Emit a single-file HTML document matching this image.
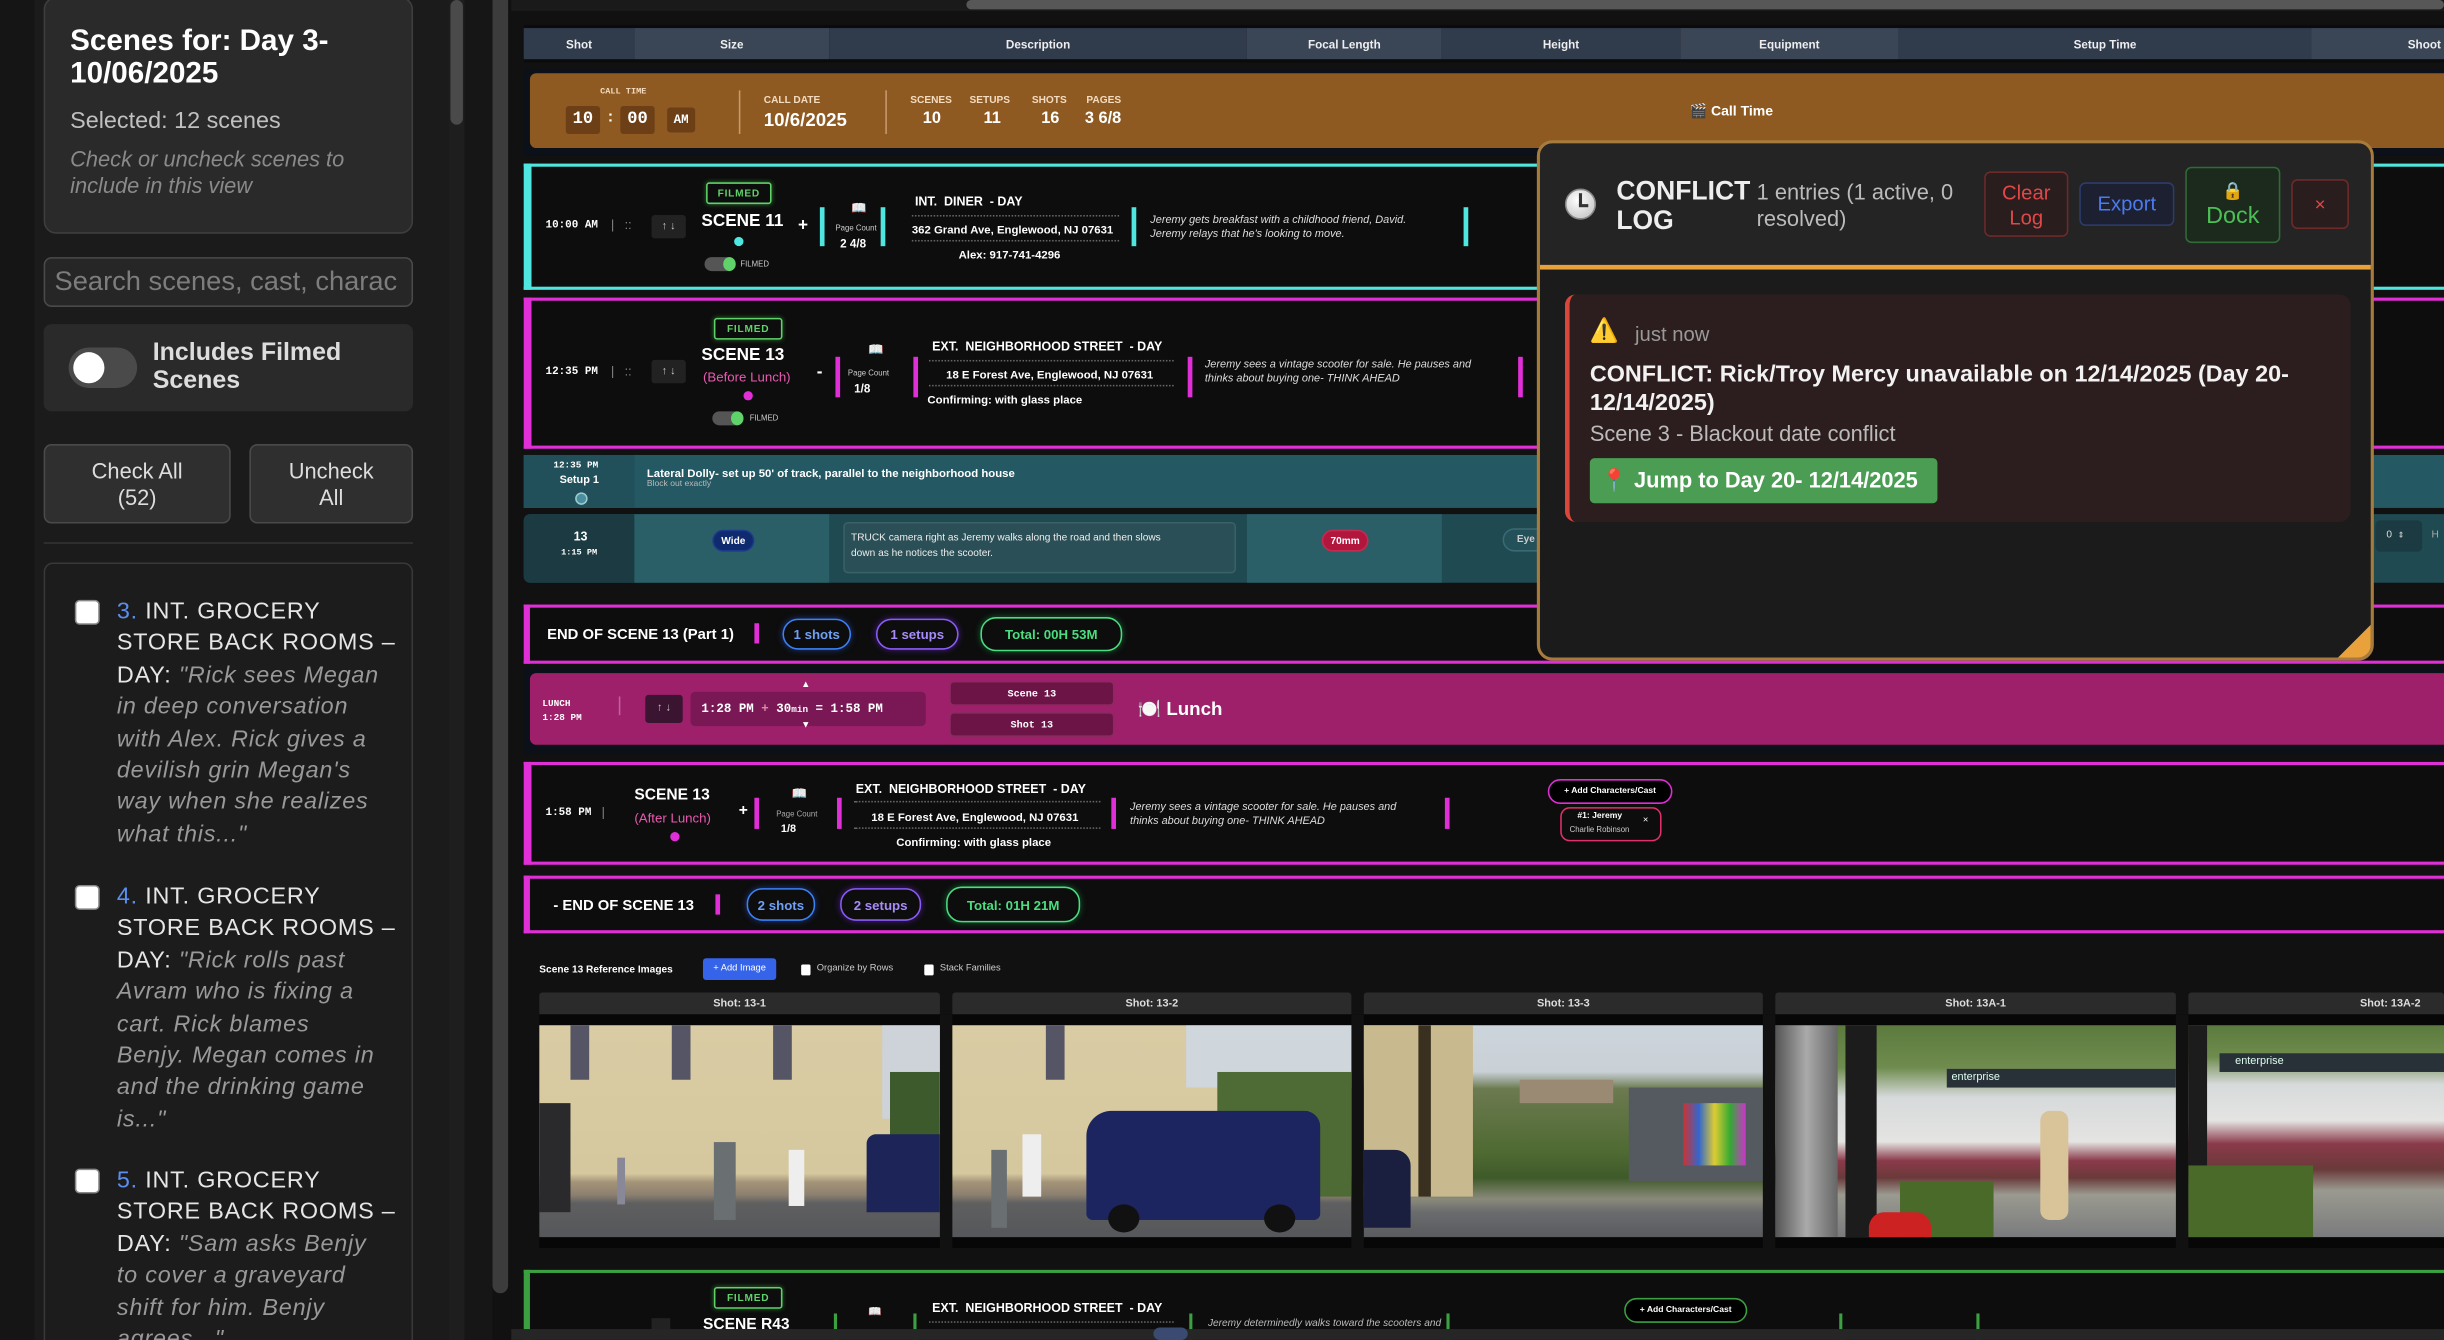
<!DOCTYPE html>
<html><head><meta charset="utf-8">
<style>
*{box-sizing:border-box;margin:0;padding:0}
html,body{width:2444px;height:1340px;overflow:hidden;background:#111}
#s{position:absolute;left:0;top:0;width:1568px;height:860px;transform:scale(1.55867,1.5581);transform-origin:0 0;font-family:"Liberation Sans",sans-serif;color:#fff;background:#111;overflow:hidden}
.a{position:absolute;white-space:nowrap}
.m{font-family:"Liberation Mono",monospace}
.b{font-weight:bold}
.hd{position:absolute;top:18px;height:20px;font-size:7.5px;font-weight:bold;display:flex;align-items:center;justify-content:center;color:#eee}
.bar{position:absolute;width:3px}
.pill{position:absolute;border-radius:10px;border:1.5px solid;font-size:8.5px;font-weight:bold;display:flex;align-items:center;justify-content:center}
.img{position:absolute;top:658px;height:136px;overflow:hidden}
.ih{position:absolute;top:637px;height:14px;background:#2b2b2b;font-size:7px;font-weight:bold;color:#ddd;display:flex;align-items:center;justify-content:center;border-radius:2px 2px 0 0}
.fb{position:absolute;border:1.5px solid #5fd36a;color:#5fd36a;font-size:6.5px;font-weight:bold;display:flex;align-items:center;justify-content:center;border-radius:2px;letter-spacing:.5px;box-shadow:0 0 3px #2a6a2a}
.it{position:absolute;left:75px;font-size:15px;line-height:20.4px;color:#e6e6e6;white-space:nowrap;letter-spacing:.5px}
.it i{color:#999}
</style></head><body><div id="s">

<div class="a" style="left:0;top:0;width:22px;height:860px;background:#151515"></div>
<div class="a" style="left:22px;top:0;width:268px;height:860px;background:#1b1b1b"></div>
<div class="a" style="left:288px;top:0;width:10px;height:860px;background:#1e1e1e"></div>
<div class="a" style="left:289px;top:0;width:8px;height:80px;background:#4a4a4a;border-radius:4px"></div>
<div class="a" style="left:298px;top:0;width:18px;height:860px;background:#161616"></div>
<div class="a" style="left:316px;top:0;width:10px;height:830px;background:#3c3c3c;border-radius:0 0 5px 5px"></div>

<div class="a" style="left:28px;top:-2px;width:237px;height:152px;background:#2a2a2a;border:1px solid #3e3e3e;border-radius:8px"></div>
<div class="a b" style="left:45px;top:16px;font-size:19px;line-height:21px">Scenes for: Day 3-<br>10/06/2025</div>
<div class="a" style="left:45px;top:69px;font-size:15px;color:#c0c0c0">Selected: 12 scenes</div>
<div class="a" style="left:45px;top:94px;font-size:14px;line-height:17px;color:#8a8a8a;font-style:italic">Check or uncheck scenes to<br>include in this view</div>

<div class="a" style="left:28px;top:165px;width:237px;height:32px;background:#262626;border:1px solid #4a4a4a;border-radius:5px"></div>
<div class="a" style="left:35px;top:170px;font-size:17.5px;color:#7d7d7d">Search scenes, cast, charac</div>

<div class="a" style="left:28px;top:208px;width:237px;height:56px;background:#2a2a2a;border-radius:5px"></div>
<div class="a" style="left:44px;top:223px;width:44px;height:26px;background:#4a4a4a;border-radius:13px"></div>
<div class="a" style="left:47px;top:226px;width:20px;height:20px;background:#fff;border-radius:50%"></div>
<div class="a b" style="left:98px;top:218px;font-size:16px;line-height:18px;color:#ddd">Includes Filmed<br>Scenes</div>

<div class="a" style="left:28px;top:285px;width:120px;height:51px;background:#2f2f2f;border:1px solid #4a4a4a;border-radius:5px;font-size:14px;color:#ddd;text-align:center;padding-top:8px;line-height:17px;white-space:normal">Check All<br>(52)</div>
<div class="a" style="left:160px;top:285px;width:105px;height:51px;background:#2f2f2f;border:1px solid #4a4a4a;border-radius:5px;font-size:14px;color:#ddd;text-align:center;padding-top:8px;line-height:17px;white-space:normal">Uncheck<br>All</div>
<div class="a" style="left:28px;top:348px;width:237px;height:1px;background:#333"></div>

<div class="a" style="left:28px;top:361px;width:237px;height:520px;background:#1c1c1c;border:1px solid #383838;border-radius:6px"></div>
<div class="a" style="left:48px;top:385px;width:16px;height:16px;background:#fff;border:1px solid #888;border-radius:3px"></div>
<div class="a" style="left:48px;top:568px;width:16px;height:16px;background:#fff;border:1px solid #888;border-radius:3px"></div>
<div class="a" style="left:48px;top:750px;width:16px;height:16px;background:#fff;border:1px solid #888;border-radius:3px"></div>
<div class="it" style="top:383px"><span style="color:#5b8ef0">3.</span> INT. GROCERY<br>STORE BACK ROOMS –<br>DAY: <i>"Rick sees Megan<br>in deep conversation<br>with Alex. Rick gives a<br>devilish grin Megan's<br>way when she realizes<br>what this..."</i></div>
<div class="it" style="top:566px"><span style="color:#5b8ef0">4.</span> INT. GROCERY<br>STORE BACK ROOMS –<br>DAY: <i>"Rick rolls past<br>Avram who is fixing a<br>cart. Rick blames<br>Benjy. Megan comes in<br>and the drinking game<br>is..."</i></div>
<div class="it" style="top:748px"><span style="color:#5b8ef0">5.</span> INT. GROCERY<br>STORE BACK ROOMS –<br>DAY: <i>"Sam asks Benjy<br>to cover a graveyard<br>shift for him. Benjy<br>agrees..."</i></div>

<div class="a" style="left:328px;top:0;width:1240px;height:860px;background:#111"></div>
<div class="a" style="left:328px;top:0;width:1240px;height:7px;background:#1a1a1a"></div>
<div class="a" style="left:620px;top:0;width:948px;height:6px;background:#575757;border-radius:3px"></div>
<div class="a" style="left:336px;top:16px;width:1232px;height:24px;background:#0b0b0b"></div>

<div class="hd" style="left:336px;width:71px;background:#303b4c">Shot</div>
<div class="hd" style="left:407px;width:125px;background:#3a4556">Size</div>
<div class="hd" style="left:532px;width:268px;background:#303b4c">Description</div>
<div class="hd" style="left:800px;width:125px;background:#3a4556">Focal Length</div>
<div class="hd" style="left:925px;width:153px;background:#303b4c">Height</div>
<div class="hd" style="left:1078px;width:140px;background:#3a4556">Equipment</div>
<div class="hd" style="left:1218px;width:265px;background:#303b4c">Setup Time</div>
<div class="hd" style="left:1483px;width:85px;background:#3a4556;justify-content:flex-end;padding-right:2px">Shoot</div>

<div class="a" style="left:336px;top:44px;width:1232px;height:56px;background:#0c1018"></div>
<div class="a" style="left:340px;top:47px;width:1228px;height:48px;background:#8e5a22;border-radius:4px 0 0 4px"></div>
<div class="a m b" style="left:385px;top:55px;font-size:5.5px;color:#f3dcc0">CALL TIME</div>
<div class="a m b" style="left:363px;top:68px;width:22px;height:18px;background:#6c3f16;border-radius:2px;font-size:11px;display:flex;align-items:center;justify-content:center">10</div>
<div class="a b" style="left:390px;top:70px;font-size:10px">:</div>
<div class="a m b" style="left:398px;top:68px;width:22px;height:18px;background:#6c3f16;border-radius:2px;font-size:11px;display:flex;align-items:center;justify-content:center">00</div>
<div class="a m b" style="left:428px;top:69px;width:18px;height:16px;background:#6c3f16;border-radius:2px;font-size:8px;display:flex;align-items:center;justify-content:center">AM</div>
<div class="a" style="left:474px;top:58px;width:1px;height:28px;background:#c89a6a"></div>
<div class="a b" style="left:490px;top:61px;font-size:6.5px;color:#f3dcc0">CALL DATE</div>
<div class="a b" style="left:490px;top:70px;font-size:12px">10/6/2025</div>
<div class="a" style="left:568px;top:58px;width:1px;height:28px;background:#c89a6a"></div>
<div class="a b" style="left:584px;top:61px;font-size:6.5px;color:#f3dcc0">SCENES</div>
<div class="a b" style="left:592px;top:70px;font-size:10.5px">10</div>
<div class="a b" style="left:622px;top:61px;font-size:6.5px;color:#f3dcc0">SETUPS</div>
<div class="a b" style="left:631px;top:70px;font-size:10.5px">11</div>
<div class="a b" style="left:662px;top:61px;font-size:6.5px;color:#f3dcc0">SHOTS</div>
<div class="a b" style="left:668px;top:70px;font-size:10.5px">16</div>
<div class="a b" style="left:697px;top:61px;font-size:6.5px;color:#f3dcc0">PAGES</div>
<div class="a b" style="left:696px;top:70px;font-size:10.5px">3 6/8</div>
<div class="a b" style="left:1084px;top:66px;font-size:9px">🎬 Call Time</div>

<div class="a" style="left:336px;top:105px;width:1232px;height:81px;background:#0d0d0d;border:2px solid #4fe6e0;border-left-width:5px;border-right:none"></div>
<div class="a m b" style="left:350px;top:141px;font-size:7px">10:00 AM</div>
<div class="a" style="left:392px;top:140px;font-size:8px;color:#888">|&nbsp;&nbsp;&nbsp;::</div>
<div class="a" style="left:418px;top:138px;width:22px;height:15px;background:#222;border-radius:2px;font-size:7px;color:#ccc;text-align:center;line-height:15px">↑ ↓</div>
<div class="fb" style="left:453px;top:117px;width:42px;height:14px">FILMED</div>
<div class="a b" style="left:450px;top:136px;font-size:11px">SCENE 11</div>
<div class="a" style="left:471px;top:152px;width:6px;height:6px;border-radius:50%;background:#4fe6e0"></div>
<div class="a" style="left:452px;top:165px;width:20px;height:9px;border-radius:5px;background:#555"></div>
<div class="a" style="left:464px;top:165px;width:8px;height:9px;border-radius:50%;background:#5fd36a"></div>
<div class="a" style="left:475px;top:167px;font-size:5px;color:#ccc">FILMED</div>
<div class="a b" style="left:512px;top:139px;font-size:11px">+</div>
<div class="bar" style="left:526px;top:133px;height:25px;background:#4fe6e0"></div>
<div class="a" style="left:546px;top:129px;font-size:8px">📖</div>
<div class="a" style="left:536px;top:144px;font-size:5px;color:#ccc">Page Count</div>
<div class="a b" style="left:539px;top:152px;font-size:7.5px">2 4/8</div>
<div class="bar" style="left:565px;top:133px;height:25px;background:#4fe6e0"></div>
<div class="a b" style="left:587px;top:125px;font-size:8px">INT.&nbsp; DINER &nbsp;- DAY</div>
<div class="a" style="left:585px;top:138px;width:133px;border-top:1px dotted #666"></div>
<div class="a b" style="left:585px;top:143px;font-size:7.3px">362 Grand Ave, Englewood, NJ 07631</div>
<div class="a" style="left:585px;top:154px;width:133px;border-top:1px dotted #666"></div>
<div class="a b" style="left:615px;top:159px;font-size:7.3px">Alex: 917-741-4296</div>
<div class="bar" style="left:726px;top:133px;height:25px;background:#4fe6e0"></div>
<div class="a" style="left:738px;top:137px;font-size:7px;line-height:9px;font-style:italic;color:#ddd">Jeremy gets breakfast with a childhood friend, David.<br>Jeremy relays that he's looking to move.</div>
<div class="bar" style="left:939px;top:133px;height:25px;background:#4fe6e0"></div>

<div class="a" style="left:336px;top:191px;width:1232px;height:97px;background:#0d0d0d;border:2px solid #e02fd6;border-left-width:5px;border-right:none"></div>
<div class="a m b" style="left:350px;top:235px;font-size:7px">12:35 PM</div>
<div class="a" style="left:392px;top:234px;font-size:8px;color:#888">|&nbsp;&nbsp;&nbsp;::</div>
<div class="a" style="left:418px;top:231px;width:22px;height:15px;background:#222;border-radius:2px;font-size:7px;color:#ccc;text-align:center;line-height:15px">↑ ↓</div>
<div class="fb" style="left:458px;top:204px;width:44px;height:14px">FILMED</div>
<div class="a b" style="left:450px;top:222px;font-size:11px">SCENE 13</div>
<div class="a" style="left:451px;top:237px;font-size:8.5px;color:#e85ab0">(Before Lunch)</div>
<div class="a" style="left:477px;top:251px;width:6px;height:6px;border-radius:50%;background:#e02fd6"></div>
<div class="a" style="left:457px;top:264px;width:20px;height:9px;border-radius:5px;background:#555"></div>
<div class="a" style="left:469px;top:264px;width:8px;height:9px;border-radius:50%;background:#5fd36a"></div>
<div class="a" style="left:481px;top:266px;font-size:5px;color:#ccc">FILMED</div>
<div class="a b" style="left:524px;top:233px;font-size:11px">-</div>
<div class="bar" style="left:536px;top:229px;height:26px;background:#e02fd6"></div>
<div class="a" style="left:557px;top:220px;font-size:8px">📖</div>
<div class="a" style="left:544px;top:237px;font-size:5px;color:#ccc">Page Count</div>
<div class="a b" style="left:548px;top:245px;font-size:7.5px">1/8</div>
<div class="bar" style="left:586px;top:229px;height:26px;background:#e02fd6"></div>
<div class="a b" style="left:598px;top:218px;font-size:8px">EXT.&nbsp; NEIGHBORHOOD STREET &nbsp;- DAY</div>
<div class="a" style="left:596px;top:231px;width:157px;border-top:1px dotted #666"></div>
<div class="a b" style="left:607px;top:236px;font-size:7.3px">18 E Forest Ave, Englewood, NJ 07631</div>
<div class="a" style="left:596px;top:247px;width:157px;border-top:1px dotted #666"></div>
<div class="a b" style="left:595px;top:252px;font-size:7.3px">Confirming: with glass place</div>
<div class="bar" style="left:762px;top:229px;height:26px;background:#e02fd6"></div>
<div class="a" style="left:773px;top:230px;font-size:7px;line-height:9px;font-style:italic;color:#ddd">Jeremy sees a vintage scooter for sale. He pauses and<br>thinks about buying one- THINK AHEAD</div>
<div class="bar" style="left:974px;top:229px;height:26px;background:#e02fd6"></div>

<div class="a" style="left:336px;top:292px;width:1232px;height:34px;background:#245863"></div>
<div class="a" style="left:336px;top:292px;width:71px;height:34px;background:#22505a"></div>
<div class="a m b" style="left:355px;top:295px;font-size:6px">12:35 PM</div>
<div class="a b" style="left:359px;top:305px;font-size:7px">Setup 1</div>
<div class="a" style="left:369px;top:316px;width:8px;height:8px;border-radius:50%;background:#4a8ea0;border:1px solid #9cc"></div>
<div class="a b" style="left:415px;top:299px;font-size:7.3px">Lateral Dolly- set up 50' of track, parallel to the neighborhood house</div>
<div class="a" style="left:415px;top:308px;font-size:5.5px;color:#bbb">Block out exactly</div>

<div class="a" style="left:336px;top:330px;width:1232px;height:44px;background:#1f4a52;border-radius:4px 0 0 4px"></div>
<div class="a" style="left:336px;top:330px;width:71px;height:44px;background:#1c3a42;border-radius:4px 0 0 4px"></div>
<div class="a" style="left:407px;top:330px;width:125px;height:44px;background:#2a5f68"></div>
<div class="a" style="left:800px;top:330px;width:125px;height:44px;background:#2a5f68"></div>
<div class="a b" style="left:368px;top:340px;font-size:8px">13</div>
<div class="a m b" style="left:360px;top:351px;font-size:5.5px">1:15 PM</div>
<div class="pill" style="left:457px;top:340px;width:27px;height:14px;background:#0f2a6e;border-color:#1c3a8a;font-size:6.5px">Wide</div>
<div class="a" style="left:541px;top:335px;width:252px;height:33px;background:#2a4f56;border:1px solid #3a6068;border-radius:3px"></div>
<div class="a" style="left:546px;top:341px;font-size:6.5px;line-height:10px;color:#eee">TRUCK camera right as Jeremy walks along the road and then slows<br>down as he notices the scooter.</div>
<div class="pill" style="left:848px;top:340px;width:30px;height:14px;background:#b3163d;border-color:#c52a50;font-size:6.5px">70mm</div>
<div class="pill" style="left:964px;top:339px;width:30px;height:15px;background:#24505a;border-color:#3a6a72;font-size:6.5px;color:#ccc">Eye</div>
<div class="a" style="left:1524px;top:334px;width:30px;height:20px;background:#1c3a42;border-radius:3px"></div>
<div class="a" style="left:1531px;top:340px;font-size:6.5px;color:#ddd">0 &nbsp;<span style="font-size:5px">⇕</span></div>
<div class="a" style="left:1560px;top:340px;font-size:6.5px;color:#aaa">H</div>

<div class="a" style="left:336px;top:388px;width:1232px;height:38px;background:#0d0d0d;border:2px solid #e02fd6;border-left-width:4px;border-right:none"></div>
<div class="a b" style="left:351px;top:402px;font-size:9.5px">END OF SCENE 13 (Part 1)</div>
<div class="bar" style="left:484px;top:400px;height:13px;background:#e02fd6"></div>
<div class="pill" style="left:502px;top:397px;width:44px;height:20px;border-color:#3b82f6;color:#6ea0f6;box-shadow:0 0 4px #1e3a8a">1 shots</div>
<div class="pill" style="left:562px;top:397px;width:53px;height:20px;border-color:#8b5cf6;color:#a78bfa;box-shadow:0 0 4px #4c1d95">1 setups</div>
<div class="pill" style="left:629px;top:396px;width:91px;height:22px;border-color:#4ade80;color:#4ade80;box-shadow:0 0 4px #166534">Total: 00H 53M</div>

<div class="a" style="left:336px;top:428px;width:1232px;height:56px;background:#0c1018"></div>
<div class="a" style="left:340px;top:432px;width:1228px;height:46px;background:#9e206b;border-radius:4px 0 0 4px"></div>
<div class="a m b" style="left:348px;top:447px;font-size:6px;line-height:9px">LUNCH<br>1:28 PM</div>
<div class="a" style="left:397px;top:447px;width:1px;height:12px;background:#c060a0"></div>
<div class="a" style="left:414px;top:446px;width:24px;height:18px;background:#3a1430;border-radius:2px;font-size:7px;color:#ccc;text-align:center;line-height:18px">↑ ↓</div>
<div class="a" style="left:443px;top:444px;width:151px;height:22px;background:#7a1856;border-radius:3px"></div>
<div class="a m b" style="left:450px;top:451px;font-size:8px">1:28 PM <span style="color:#d8a">+</span> 30<span style="font-size:6px">min</span> = 1:58 PM</div>
<div class="a" style="left:514px;top:437px;font-size:6px">▲</div>
<div class="a" style="left:514px;top:463px;font-size:6px">▼</div>
<div class="a m b" style="left:609px;top:437px;width:106px;height:16px;background:#6c1446;border:1px solid #8a2a60;border-radius:3px;font-size:6.5px;display:flex;align-items:center;justify-content:center">Scene 13</div>
<div class="a m b" style="left:609px;top:457px;width:106px;height:16px;background:#6c1446;border:1px solid #8a2a60;border-radius:3px;font-size:6.5px;display:flex;align-items:center;justify-content:center">Shot 13</div>
<div class="a b" style="left:730px;top:448px;font-size:12px">🍽️ Lunch</div>

<div class="a" style="left:336px;top:489px;width:1232px;height:66px;background:#0d0d0d;border:2px solid #e02fd6;border-left-width:5px;border-right:none"></div>
<div class="a m b" style="left:350px;top:518px;font-size:7px">1:58 PM</div>
<div class="a" style="left:386px;top:517px;font-size:8px;color:#888">|</div>
<div class="a b" style="left:407px;top:505px;font-size:10px">SCENE 13</div>
<div class="a" style="left:407px;top:520px;font-size:8.5px;color:#e85ab0">(After Lunch)</div>
<div class="a" style="left:430px;top:534px;width:6px;height:6px;border-radius:50%;background:#e02fd6"></div>
<div class="a b" style="left:474px;top:515px;font-size:10px">+</div>
<div class="bar" style="left:484px;top:512px;height:20px;background:#e02fd6"></div>
<div class="a" style="left:508px;top:505px;font-size:8px">📖</div>
<div class="a" style="left:498px;top:520px;font-size:5px;color:#aaa">Page Count</div>
<div class="a b" style="left:501px;top:529px;font-size:7px">1/8</div>
<div class="bar" style="left:537px;top:512px;height:20px;background:#e02fd6"></div>
<div class="a b" style="left:549px;top:502px;font-size:8px">EXT.&nbsp; NEIGHBORHOOD STREET &nbsp;- DAY</div>
<div class="a" style="left:548px;top:514px;width:158px;border-top:1px dotted #666"></div>
<div class="a b" style="left:559px;top:520px;font-size:7.3px">18 E Forest Ave, Englewood, NJ 07631</div>
<div class="a" style="left:548px;top:531px;width:158px;border-top:1px dotted #666"></div>
<div class="a b" style="left:575px;top:536px;font-size:7.3px">Confirming: with glass place</div>
<div class="bar" style="left:713px;top:512px;height:20px;background:#e02fd6"></div>
<div class="a" style="left:725px;top:514px;font-size:7px;line-height:9px;font-style:italic;color:#ddd">Jeremy sees a vintage scooter for sale. He pauses and<br>thinks about buying one- THINK AHEAD</div>
<div class="bar" style="left:927px;top:512px;height:20px;background:#e02fd6"></div>
<div class="pill" style="left:993px;top:500px;width:80px;height:16px;border-color:#e02fd6;background:#000;font-size:5.5px">+ Add Characters/Cast</div>
<div class="a" style="left:1001px;top:518px;width:65px;height:22px;border:1.5px solid #e0306a;border-radius:6px"></div>
<div class="a b" style="left:1012px;top:521px;font-size:5.5px">#1: Jeremy</div>
<div class="a" style="left:1007px;top:530px;font-size:5px;color:#ccc">Charlie Robinson</div>
<div class="a" style="left:1054px;top:524px;font-size:6px">×</div>

<div class="a" style="left:336px;top:562px;width:1232px;height:37px;background:#0d0d0d;border:2px solid #e02fd6;border-left-width:4px;border-right:none"></div>
<div class="a b" style="left:355px;top:576px;font-size:9.5px">- END OF SCENE 13</div>
<div class="bar" style="left:459px;top:574px;height:13px;background:#e02fd6"></div>
<div class="pill" style="left:479px;top:570px;width:44px;height:21px;border-color:#3b82f6;color:#6ea0f6;box-shadow:0 0 4px #1e3a8a">2 shots</div>
<div class="pill" style="left:539px;top:570px;width:52px;height:21px;border-color:#8b5cf6;color:#a78bfa;box-shadow:0 0 4px #4c1d95">2 setups</div>
<div class="pill" style="left:607px;top:569px;width:86px;height:23px;border-color:#4ade80;color:#4ade80;box-shadow:0 0 4px #166534">Total: 01H 21M</div>

<div class="a b" style="left:346px;top:619px;font-size:6.5px">Scene 13 Reference Images</div>
<div class="a" style="left:451px;top:615px;width:47px;height:14px;background:#3563e9;border-radius:2px;font-size:6px;text-align:center;line-height:14px">+ Add Image</div>
<div class="a" style="left:514px;top:619px;width:6px;height:7px;background:#fff;border-radius:1px"></div>
<div class="a" style="left:524px;top:619px;font-size:6px;color:#ccc">Organize by Rows</div>
<div class="a" style="left:593px;top:619px;width:6px;height:7px;background:#fff;border-radius:1px"></div>
<div class="a" style="left:603px;top:619px;font-size:6px;color:#ccc">Stack Families</div>

<div class="ih" style="left:346px;width:257px">Shot: 13-1</div>
<div class="ih" style="left:611px;width:256px">Shot: 13-2</div>
<div class="ih" style="left:875px;width:256px">Shot: 13-3</div>
<div class="ih" style="left:1139px;width:257px">Shot: 13A-1</div>
<div class="ih" style="left:1404px;width:164px;justify-content:flex-end;padding-right:15px">Shot: 13A-2</div>
<div class="a" style="left:346px;top:651px;width:1222px;height:150px;background:#070707"></div>
<div class="a" style="left:603px;top:651px;width:8px;height:150px;background:#111"></div>
<div class="a" style="left:867px;top:651px;width:8px;height:150px;background:#111"></div>
<div class="a" style="left:1131px;top:651px;width:8px;height:150px;background:#111"></div>
<div class="a" style="left:1396px;top:651px;width:8px;height:150px;background:#111"></div>

<div class="img" style="left:346px;width:257px;background:linear-gradient(#d9cba3 0%,#d6c89e 70%,#a49478 74%,#8c8070 80%,#5f5f60 84%,#55575a 100%)">
 <div class="a" style="left:220px;top:0;width:37px;height:60px;background:#cdd3d8"></div>
 <div class="a" style="left:225px;top:30px;width:32px;height:70px;background:#3d5a2c"></div>
 <div class="a" style="left:0;top:50px;width:20px;height:70px;background:#2a2a2c"></div>
 <div class="a" style="left:20px;top:0;width:12px;height:35px;background:#556"></div>
 <div class="a" style="left:85px;top:0;width:12px;height:35px;background:#556"></div>
 <div class="a" style="left:150px;top:0;width:12px;height:35px;background:#556"></div>
 <div class="a" style="left:112px;top:75px;width:14px;height:50px;background:#6a6f72"></div>
 <div class="a" style="left:160px;top:80px;width:10px;height:36px;background:#eee"></div>
 <div class="a" style="left:210px;top:70px;width:47px;height:50px;background:#1c2458;border-radius:6px 0 0 0"></div>
 <div class="a" style="left:50px;top:85px;width:5px;height:30px;background:#889"></div>
</div>
<div class="img" style="left:611px;width:256px;background:linear-gradient(#d9cba3 0%,#d6c89e 70%,#a49478 74%,#8c8070 80%,#5f5f60 84%,#55575a 100%)">
 <div class="a" style="left:150px;top:0;width:106px;height:40px;background:#cfd6dc"></div>
 <div class="a" style="left:170px;top:30px;width:86px;height:80px;background:#4f6b35"></div>
 <div class="a" style="left:60px;top:0;width:12px;height:35px;background:#556"></div>
 <div class="a" style="left:25px;top:80px;width:10px;height:50px;background:#6a6f72"></div>
 <div class="a" style="left:45px;top:70px;width:12px;height:40px;background:#eee"></div>
 <div class="a" style="left:86px;top:55px;width:150px;height:70px;background:#1c2560;border-radius:16px 10px 4px 4px"></div>
 <div class="a" style="left:100px;top:115px;width:20px;height:18px;background:#111;border-radius:50%"></div>
 <div class="a" style="left:200px;top:115px;width:20px;height:18px;background:#111;border-radius:50%"></div>
</div>
<div class="img" style="left:875px;width:256px;background:linear-gradient(#cdd5dc 0%,#c9d0d6 22%,#6c7a50 30%,#4f6a32 60%,#3f5a2a 72%,#8a8a7a 82%,#6b6c6e 88%,#5a5b5e 100%)">
 <div class="a" style="left:0;top:0;width:70px;height:110px;background:#c8b98e"></div>
 <div class="a" style="left:35px;top:0;width:8px;height:110px;background:#3a3020"></div>
 <div class="a" style="left:0;top:80px;width:30px;height:50px;background:#1a1f40;border-radius:0 10px 0 0"></div>
 <div class="a" style="left:170px;top:40px;width:86px;height:60px;background:#555a60"></div>
 <div class="a" style="left:205px;top:50px;width:40px;height:40px;background:linear-gradient(90deg,#c33,#36c,#dc3,#3a3,#c3c)"></div>
 <div class="a" style="left:100px;top:35px;width:60px;height:15px;background:#9a8a74"></div>
</div>
<div class="img" style="left:1139px;width:257px;background:linear-gradient(#5b7a3d 0%,#6f8c4e 20%,#d7dadb 34%,#e4e4e2 55%,#8a3a4a 64%,#6a3a3a 72%,#9a9a90 80%,#7a7b7d 100%)">
 <div class="a" style="left:0;top:0;width:40px;height:136px;background:linear-gradient(90deg,#555,#aaa,#666)"></div>
 <div class="a" style="left:45px;top:0;width:20px;height:136px;background:#1c1c1c"></div>
 <div class="a" style="left:110px;top:28px;width:147px;height:12px;background:#283038"></div>
 <div class="a" style="left:113px;top:30px;font-size:7px;color:#dfe">enterprise</div>
 <div class="a" style="left:170px;top:55px;width:18px;height:70px;background:#d9c49a;border-radius:6px"></div>
 <div class="a" style="left:80px;top:100px;width:60px;height:36px;background:#4a6a2a"></div>
 <div class="a" style="left:60px;top:120px;width:40px;height:16px;background:#c22;border-radius:10px 10px 0 0"></div>
</div>
<div class="img" style="left:1404px;width:164px;background:linear-gradient(#5b7a3d 0%,#6f8c4e 15%,#d7dadb 28%,#e4e4e2 45%,#8a3a4a 56%,#6a3a3a 68%,#9a9a90 78%,#7a7b7d 100%)">
 <div class="a" style="left:0;top:0;width:12px;height:136px;background:#1c1c1c"></div>
 <div class="a" style="left:20px;top:18px;width:144px;height:12px;background:#283038"></div>
 <div class="a" style="left:30px;top:20px;font-size:7px;color:#dfe">enterprise</div>
 <div class="a" style="left:0;top:90px;width:80px;height:46px;background:#4a6a2a"></div>
</div>

<div class="a" style="left:336px;top:815px;width:1232px;height:45px;background:#0d0d0d;border:2px solid #3aa040;border-left-width:4px;border-right:none;border-bottom:none"></div>
<div class="fb" style="left:458px;top:826px;width:44px;height:14px">FILMED</div>
<div class="a b" style="left:451px;top:845px;font-size:10px">SCENE R43</div>
<div class="a" style="left:418px;top:846px;width:12px;height:10px;background:#222"></div>
<div class="bar" style="left:535px;top:843px;height:17px;background:#3aa040;width:2px"></div>
<div class="a" style="left:557px;top:838px;font-size:7px">📖</div>
<div class="bar" style="left:586px;top:843px;height:17px;background:#3aa040;width:2px"></div>
<div class="a b" style="left:598px;top:835px;font-size:8px">EXT.&nbsp; NEIGHBORHOOD STREET &nbsp;- DAY</div>
<div class="a" style="left:596px;top:848px;width:157px;border-top:1px dotted #666"></div>
<div class="bar" style="left:763px;top:843px;height:17px;background:#3aa040;width:2px"></div>
<div class="a" style="left:775px;top:846px;font-size:6.5px;font-style:italic;color:#bbb">Jeremy determinedly walks toward the scooters and</div>
<div class="bar" style="left:928px;top:843px;height:17px;background:#3aa040;width:2px"></div>
<div class="pill" style="left:1042px;top:833px;width:79px;height:16px;border-color:#3aa040;background:#000;font-size:5.5px">+ Add Characters/Cast</div>
<div class="bar" style="left:1180px;top:843px;height:17px;background:#3aa040;width:2px"></div>
<div class="bar" style="left:1268px;top:843px;height:17px;background:#3aa040;width:2px"></div>
<div class="a" style="left:328px;top:853px;width:1240px;height:7px;background:#262626"></div>
<div class="a" style="left:740px;top:852px;width:22px;height:8px;background:#3a4a70;border-radius:4px"></div>

<div class="a" style="left:986px;top:90px;width:537px;height:334px;background:#1b1b1b;border:2px solid #a67b3c;border-radius:10px;overflow:hidden">
 <div class="a" style="left:0;top:0;width:535px;height:78px;background:#242424"></div>
 <div class="a" style="left:0;top:78px;width:535px;height:3px;background:#e9a23b"></div>
 <div class="a" style="left:16px;top:29px;width:20px;height:20px;border-radius:50%;background:radial-gradient(circle at 40% 35%,#fff,#bbb);border:1px solid #888"></div>
 <div class="a" style="left:25px;top:32px;width:1.5px;height:8px;background:#333"></div>
 <div class="a" style="left:25px;top:39px;width:6px;height:1.5px;background:#333"></div>
 <div class="a b" style="left:49px;top:21px;font-size:17px;line-height:19px;color:#eee">CONFLICT<br>LOG</div>
 <div class="a" style="left:139px;top:23px;font-size:14px;line-height:17px;color:#bbb">1 entries (1 active, 0<br>resolved)</div>
 <div class="a" style="left:285px;top:18px;width:54px;height:42px;border:1px solid #6e2a2a;background:#2a1d1d;border-radius:4px;color:#e04848;font-size:13px;line-height:16px;text-align:center;padding-top:5px;white-space:normal">Clear<br>Log</div>
 <div class="a" style="left:346px;top:25px;width:61px;height:28px;border:1px solid #2c3c6c;background:#1c2030;border-radius:4px;color:#4a7cf0;font-size:13px;text-align:center;line-height:26px">Export</div>
 <div class="a" style="left:414px;top:15px;width:61px;height:49px;border:1px solid #2f6b35;background:#1c2a1e;border-radius:4px;color:#4cc055;font-size:15px;text-align:center;line-height:16px;padding-top:6px;white-space:normal"><span style="font-size:11px">🔒</span><br>Dock</div>
 <div class="a" style="left:482px;top:23px;width:37px;height:32px;border:1px solid #6e2a2a;background:#2a1d1d;border-radius:4px;color:#e04848;font-size:12px;text-align:center;line-height:30px">×</div>
 <div class="a" style="left:16px;top:97px;width:504px;height:146px;background:#2c1e1e;border-left:3px solid #d9473b;border-radius:7px"></div>
 <div class="a" style="left:32px;top:111px;font-size:15px">⚠️</div>
 <div class="a" style="left:61px;top:115px;font-size:13px;color:#999">just now</div>
 <div class="a b" style="left:32px;top:140px;font-size:15px;line-height:18px;color:#f2f2f2">CONFLICT: Rick/Troy Mercy unavailable on 12/14/2025 (Day 20-<br>12/14/2025)</div>
 <div class="a" style="left:32px;top:178px;font-size:14px;color:#bbb">Scene 3 - Blackout date conflict</div>
 <div class="a b" style="left:32px;top:202px;width:223px;height:29px;background:#4a9d52;border-radius:3px;font-size:14px;line-height:29px;padding-left:7px">📍 Jump to Day 20- 12/14/2025</div>
 <div class="a" style="left:508px;top:307px;width:0;height:0;border-left:27px solid transparent;border-bottom:27px solid #e9a23b"></div>
</div>

</div></body></html>
